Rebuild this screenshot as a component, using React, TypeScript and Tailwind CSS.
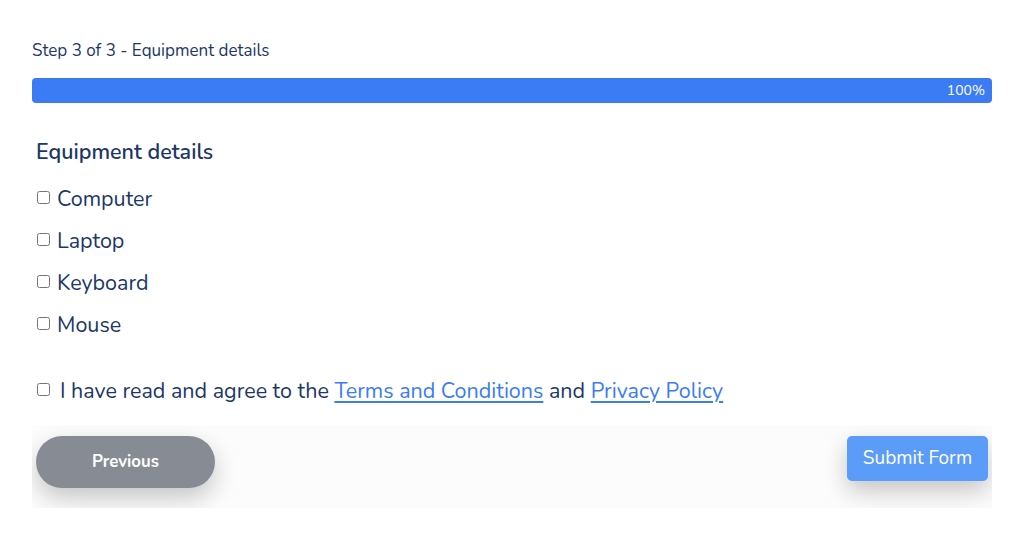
import React from "react";

const items = ["Computer", "Laptop", "Keyboard", "Mouse"];

export default function App() {
  return (
    <div className="w-[1024px] h-[550px] bg-white font-['Nunito','Lato',sans-serif] text-[#1d3768]">
      <div className="mx-[32px] pt-[41px]">
        <p className="text-[17px] leading-[20px]">Step 3 of 3 - Equipment details</p>
        <div className="mt-[17px] h-[25px] rounded-[4px] bg-[#3b7cf4] flex items-center justify-end pr-[7px]">
          <span className="text-white text-[14px]">100%</span>
        </div>

        <div className="px-[4px]">
          <h2 className="mt-[35px] text-[21.5px] font-semibold leading-[28px]">Equipment details</h2>
          <div className="mt-[19px] flex flex-col gap-[14px]">
            {items.map((it) => (
              <label key={it} className="flex items-center h-[28px] text-[21.5px]">
                <input type="checkbox" className="w-[13px] h-[13px] ml-[1px] mr-[7px] mb-[4px]" />
                {it}
              </label>
            ))}
          </div>

          <label className="mt-[38px] flex items-center h-[28px] text-[21.5px]">
            <input type="checkbox" className="w-[13px] h-[13px] ml-[1px] mr-[10px] mb-[4px]" />
            <span>
              I have read and agree to the{" "}
              <a href="#" className="text-[#3b7cf4] underline underline-offset-[3px]">Terms and Conditions</a> and{" "}
              <a href="#" className="text-[#3b7cf4] underline underline-offset-[3px]">Privacy Policy</a>
            </span>
          </label>
        </div>

        <div className="mt-[20px] h-[83px] overflow-hidden bg-[#fcfcfc] flex justify-between items-start pt-[11px] px-[4px]">
          <button className="w-[179px] h-[52px] rounded-full bg-[#878c94] text-white text-[16.8px] font-bold shadow-[0_10px_25px_rgba(0,0,0,0.22)]">
            Previous
          </button>
          <button className="w-[141px] h-[45px] rounded-[5px] bg-[#5b9cf8] text-white text-[19px] shadow-[0_10px_25px_rgba(0,0,0,0.22)]">
            Submit Form
          </button>
        </div>
      </div>
    </div>
  );
}
